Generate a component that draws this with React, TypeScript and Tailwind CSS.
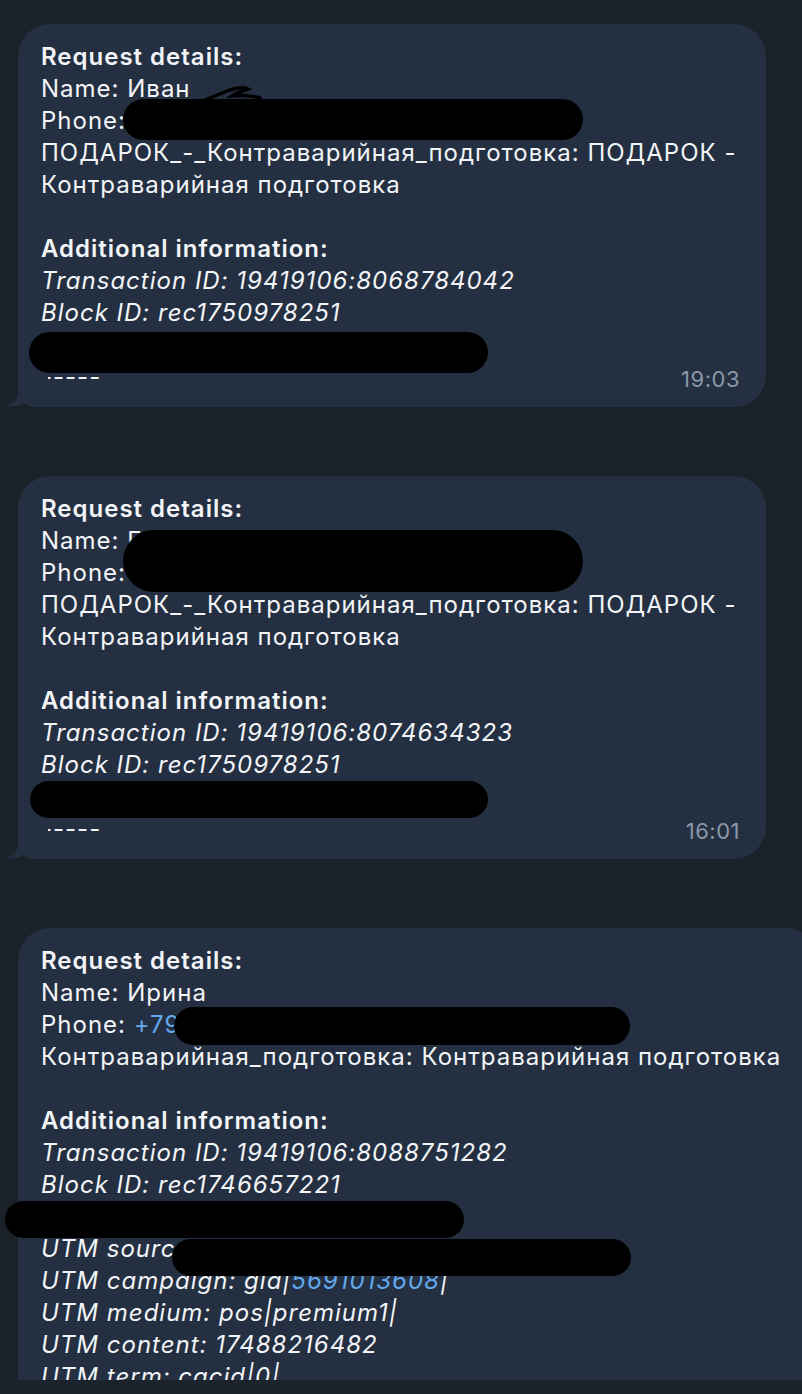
import React from 'react'

const BUBBLE = '#243041'

type Line = { text?: React.ReactNode; kind?: 'bold' | 'italic' | 'plain' }

const Tail = () => (
    <svg
        className="absolute left-[-14px] bottom-0"
        width="44"
        height="32"
        viewBox="0 0 44 32"
    >
        <path
            d="M14,0 L14,18 C14,24 9,29 0,31.5 C9,32.5 19,30 26,25.5 C30,29 35,32 44,32 L44,0 Z"
            fill={BUBBLE}
        />
    </svg>
)

// black marker blobs that hide personal data
const Blob = ({ className }: { className: string }) => (
    <div className={`absolute bg-black rounded-full ${className}`} />
)

const TextLine = ({ line }: { line: Line }) => {
    const k = line.kind ?? 'plain'
    const cls =
        k === 'bold' ? 'font-semibold' : k === 'italic' ? 'italic' : ''
    return (
        <div className={`h-[32px] leading-[32px] whitespace-nowrap ${cls}`}>
            {line.text ?? '\u00a0'}
        </div>
    )
}

const Bubble = ({
    lines,
    time,
    tail,
    wide,
    children,
}: {
    lines: Line[]
    time?: string
    tail?: boolean
    wide?: boolean
    children?: React.ReactNode
}) => (
    <div
        className={`relative ml-[18px] shrink-0 bg-[#243041] pt-[17px] pb-[14px] pl-[23px] pr-[26px] text-[24px] tracking-[1px] text-[#f2f4f7] ${
            wide ? 'w-[800px] rounded-t-[32px]' : 'w-[748px] rounded-[32px] rounded-bl-[16px]'
        }`}
    >
        {lines.map((l, i) => (
            <TextLine key={i} line={l} />
        ))}
        {time && (
            <div className="flex h-[32px] items-end justify-between">
                <span className="leading-[32px]">-----</span>
                <span className="text-[22px] leading-[28px] tracking-[0.5px] text-[#8b97a8]">{time}</span>
            </div>
        )}
        {tail && <Tail />}
        {children}
    </div>
)

export default function App() {
    const first: Line[] = [
        { text: 'Request details:', kind: 'bold' },
        { text: 'Name: Иван' },
        { text: 'Phone:' },
        { text: 'ПОДАРОК_-_Контраварийная_подготовка: ПОДАРОК -' },
        { text: 'Контраварийная подготовка' },
        {},
        { text: 'Additional information:', kind: 'bold' },
        { text: 'Transaction ID: 19419106:8068784042', kind: 'italic' },
        { text: 'Block ID: rec1750978251', kind: 'italic' },
        {},
    ]
    const second: Line[] = [
        { text: 'Request details:', kind: 'bold' },
        { text: 'Name: Е' },
        { text: 'Phone:' },
        { text: 'ПОДАРОК_-_Контраварийная_подготовка: ПОДАРОК -' },
        { text: 'Контраварийная подготовка' },
        {},
        { text: 'Additional information:', kind: 'bold' },
        { text: 'Transaction ID: 19419106:8074634323', kind: 'italic' },
        { text: 'Block ID: rec1750978251', kind: 'italic' },
        {},
    ]
    const third: Line[] = [
        { text: 'Request details:', kind: 'bold' },
        { text: 'Name: Ирина' },
        {
            text: (
                <>
                    Phone: <span className="text-[#62a8ec]">+79</span>
                </>
            ),
        },
        { text: 'Контраварийная_подготовка: Контраварийная подготовка' },
        {},
        { text: 'Additional information:', kind: 'bold' },
        { text: 'Transaction ID: 19419106:8088751282', kind: 'italic' },
        { text: 'Block ID: rec1746657221', kind: 'italic' },
        {},
        { text: 'UTM source: ', kind: 'italic' },
        {
            text: (
                <>
                    UTM campaign: gid|<span className="text-[#62a8ec]">5691013608</span>|
                </>
            ),
            kind: 'italic',
        },
        { text: 'UTM medium: pos|premium1|', kind: 'italic' },
        { text: 'UTM content: 17488216482', kind: 'italic' },
        { text: 'UTM term: cgcid|0|', kind: 'italic' },
    ]

    return (
        <div
            className="w-[802px] h-[1394px] overflow-hidden bg-[#1b2129] flex flex-col"
            style={{ fontFamily: 'Inter, "Noto Sans", sans-serif' }}
        >
            <div className="h-[1380px] overflow-hidden flex flex-col pt-[24px] gap-[69px]">
                <Bubble lines={first} time="19:03" tail>
                    <svg className="absolute left-[172px] top-[60px]" width="80" height="22" viewBox="0 0 80 22">
                        <path
                            d="M10,18 C20,14 30,10 40,6 C46,4 54,3 58,5 C52,7 46,9 42,12 C50,11 60,11 70,14"
                            stroke="black"
                            strokeWidth="3.5"
                            fill="none"
                            strokeLinecap="round"
                        />
                    </svg>
                    <Blob className="left-[105px] top-[75px] w-[460px] h-[41px]" />
                    <Blob className="left-[11px] top-[308px] w-[459px] h-[41px]" />
                </Bubble>
                <Bubble lines={second} time="16:01" tail>
                    <Blob className="left-[105px] top-[54px] w-[460px] h-[62px]" />
                    <Blob className="left-[12px] top-[305px] w-[458px] h-[37px]" />
                </Bubble>
                <Bubble lines={third} wide>
                    <Blob className="left-[156px] top-[79px] w-[456px] h-[38px]" />
                    <Blob className="left-[-13px] top-[273px] w-[459px] h-[37px]" />
                    <Blob className="left-[154px] top-[311px] w-[459px] h-[37px]" />
                </Bubble>
            </div>
            <div className="h-[14px] bg-[#1d232b]" />
        </div>
    )
}
